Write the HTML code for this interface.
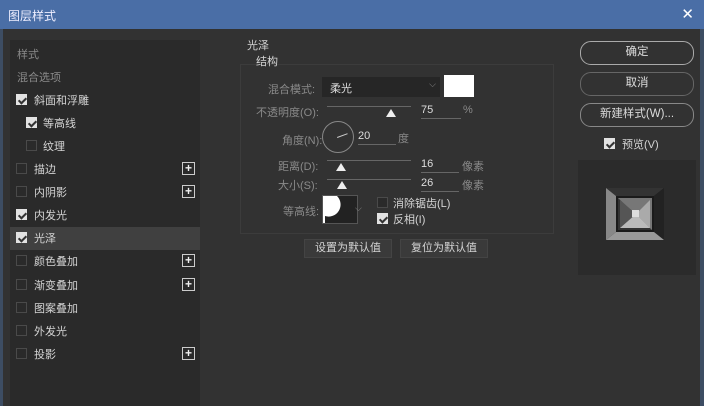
<!DOCTYPE html>
<html><head><meta charset="utf-8"><style>
*{margin:0;padding:0;box-sizing:border-box}
body{width:704px;height:406px;background:#323232;overflow:hidden;position:relative;font-family:"Liberation Sans","Noto Sans CJK SC",sans-serif;font-size:11px;color:#d4d4d4}
.a{position:absolute}
.title{left:0;top:0;width:704px;height:29px;background:#4a6ea6;color:#eef;font-size:12px;padding:7px 0 0 8px}
.cb{position:absolute;width:11px;height:11px;border:1px solid #4a4a4a;background:#2a2a2a}
.cb.on{background:#e2e2e2;border-color:#e2e2e2}
.cb.on:after{content:"";position:absolute;left:3px;top:1px;width:3px;height:6px;border:solid #333;border-width:0 2px 2px 0;transform:rotate(45deg)}
.plus{position:absolute;left:182px;width:13px;height:13px;border:1px solid #ccc;color:#eee;font-size:12px;line-height:10px;text-align:center;font-weight:bold}
.lbl{position:absolute;color:#8a8a8a}
.btn{position:absolute;left:580px;width:114px;height:24px;border:1px solid #888;border-radius:11px;text-align:center;line-height:21px;color:#ddd;font-size:11.5px}
.sl{position:absolute;height:1px;background:#666}
.tri{position:absolute;width:0;height:0;border-left:5px solid transparent;border-right:5px solid transparent;border-bottom:8px solid #eee}
.in{position:absolute;border-bottom:1px solid #666;color:#ddd}
</style></head><body>
<div class="a title">图层样式</div>
<div class="a" style="right:10px;top:5px;color:#fff;font-size:15px">✕</div>
<div class="a" style="left:0;top:29px;width:3px;height:377px;background:#3d4d63"></div>
<div class="a" style="right:0;top:29px;width:4px;height:377px;background:#3d4d63"></div>
<div class="a" style="left:10px;top:40px;width:190px;height:366px;background:#2a2a2a"></div>
<div class="a" style="left:10px;top:227px;width:190px;height:23px;background:#404040"></div>
<div class="lbl" style="left:17px;top:46px">样式</div>
<div class="lbl" style="left:17px;top:69px">混合选项</div>
<div class="cb on" style="left:16px;top:94px"></div><div class="a" style="left:34px;top:92px">斜面和浮雕</div>
<div class="cb on" style="left:26px;top:117px"></div><div class="a" style="left:43px;top:115px">等高线</div>
<div class="cb" style="left:26px;top:140px"></div><div class="a" style="left:43px;top:138px">纹理</div>
<div class="cb" style="left:16px;top:163px"></div><div class="a" style="left:34px;top:161px">描边</div><div class="plus" style="top:162px">+</div>
<div class="cb" style="left:16px;top:186px"></div><div class="a" style="left:34px;top:184px">内阴影</div><div class="plus" style="top:185px">+</div>
<div class="cb on" style="left:16px;top:209px"></div><div class="a" style="left:34px;top:207px">内发光</div>
<div class="cb on" style="left:16px;top:232px"></div><div class="a" style="left:34px;top:230px">光泽</div>
<div class="cb" style="left:16px;top:255px"></div><div class="a" style="left:34px;top:253px">颜色叠加</div><div class="plus" style="top:254px">+</div>
<div class="cb" style="left:16px;top:279px"></div><div class="a" style="left:34px;top:277px">渐变叠加</div><div class="plus" style="top:278px">+</div>
<div class="cb" style="left:16px;top:302px"></div><div class="a" style="left:34px;top:300px">图案叠加</div>
<div class="cb" style="left:16px;top:325px"></div><div class="a" style="left:34px;top:323px">外发光</div>
<div class="cb" style="left:16px;top:348px"></div><div class="a" style="left:34px;top:346px">投影</div><div class="plus" style="top:347px">+</div>

<div class="a" style="left:247px;top:37px">光泽</div>
<div class="a" style="left:240px;top:64px;width:314px;height:170px;border:1px solid #3c3c3c"></div>
<div class="a" style="left:256px;top:53px">结构</div>
<div class="lbl" style="left:268px;top:81px">混合模式:</div>
<div class="a" style="left:322px;top:77px;width:118px;height:20px;background:#262626;padding:3px 8px;color:#ddd">柔光<span style="position:absolute;right:4px;top:2px;color:#888;font-size:9px">⌵</span></div>
<div class="a" style="left:444px;top:75px;width:30px;height:22px;background:#fff"></div>
<div class="lbl" style="left:256px;top:104px">不透明度(O):</div>
<div class="sl" style="left:327px;top:106px;width:84px"></div><div class="tri" style="left:386px;top:109px"></div>
<div class="in" style="left:421px;top:104px;width:40px;height:15px">75</div><div class="lbl" style="left:463px;top:104px">%</div>
<div class="lbl" style="left:282px;top:132px">角度(N):</div>
<div class="a" style="left:322px;top:121px;width:32px;height:32px;border:1px solid #888;border-radius:50%"></div>
<div class="a" style="left:337px;top:131px;width:11px;height:1px;background:#ccc;transform:rotate(-20deg);transform-origin:0 0;top:137px"></div>
<div class="in" style="left:358px;top:130px;width:38px;height:15px">20</div><div class="lbl" style="left:398px;top:130px">度</div>
<div class="lbl" style="left:278px;top:158px">距离(D):</div>
<div class="sl" style="left:327px;top:160px;width:84px"></div><div class="tri" style="left:336px;top:163px"></div>
<div class="in" style="left:421px;top:158px;width:38px;height:15px">16</div><div class="lbl" style="left:462px;top:158px">像素</div>
<div class="lbl" style="left:278px;top:177px">大小(S):</div>
<div class="sl" style="left:327px;top:179px;width:84px"></div><div class="tri" style="left:337px;top:181px"></div>
<div class="in" style="left:421px;top:177px;width:38px;height:15px">26</div><div class="lbl" style="left:462px;top:177px">像素</div>
<div class="lbl" style="left:283px;top:203px">等高线:</div>
<div class="a" style="left:322px;top:195px;width:36px;height:29px;background:#222;border:1px solid #555"></div>
<svg class="a" style="left:323px;top:196px" width="26" height="27"><path d="M0 0H14A12 12 0 0 1 2 20V27H0Z" fill="#fff"/></svg>
<div class="a" style="left:355px;top:203px;color:#888;font-size:9px">⌵</div>
<div class="cb" style="left:377px;top:197px"></div><div class="a" style="left:393px;top:195px">消除锯齿(L)</div>
<div class="cb on" style="left:377px;top:213px"></div><div class="a" style="left:393px;top:211px">反相(I)</div>
<div class="a" style="left:304px;top:239px;width:88px;height:19px;background:#3a3a3a;border:1px solid #444;text-align:center;line-height:17px">设置为默认值</div>
<div class="a" style="left:400px;top:239px;width:88px;height:19px;background:#3a3a3a;border:1px solid #444;text-align:center;line-height:17px">复位为默认值</div>

<div class="btn" style="top:41px;border-color:#aaa;border-width:1.5px">确定</div>
<div class="btn" style="top:72px;border-color:#666">取消</div>
<div class="btn" style="top:103px">新建样式(W)...</div>
<div class="cb on" style="left:604px;top:138px"></div><div class="a" style="left:622px;top:136px">预览(V)</div>
<div class="a" style="left:578px;top:160px;width:118px;height:115px;background:#2b2b2b"></div>
<svg class="a" style="left:606px;top:188px" width="58" height="52">
<rect width="58" height="52" fill="#1a1a1a"/>
<polygon points="0,0 58,0 48,8 10,8" fill="#333"/>
<polygon points="0,0 10,8 10,44 0,52" fill="#888"/>
<polygon points="58,0 58,52 48,44 48,8" fill="#222"/>
<polygon points="0,52 10,44 48,44 58,52" fill="#999"/>
<rect x="12" y="10" width="34" height="32" fill="#777"/>
<polygon points="12,10 46,42 12,42" fill="#333"/>
<polygon points="14,12 30,26 14,40" fill="#555"/>
<polygon points="44,12 30,26 44,40" fill="#aaa"/>
<polygon points="14,40 30,26 44,40" fill="#bbb"/>
<rect x="26" y="22" width="7" height="7" fill="#ddd"/>
</svg>
</body></html>
